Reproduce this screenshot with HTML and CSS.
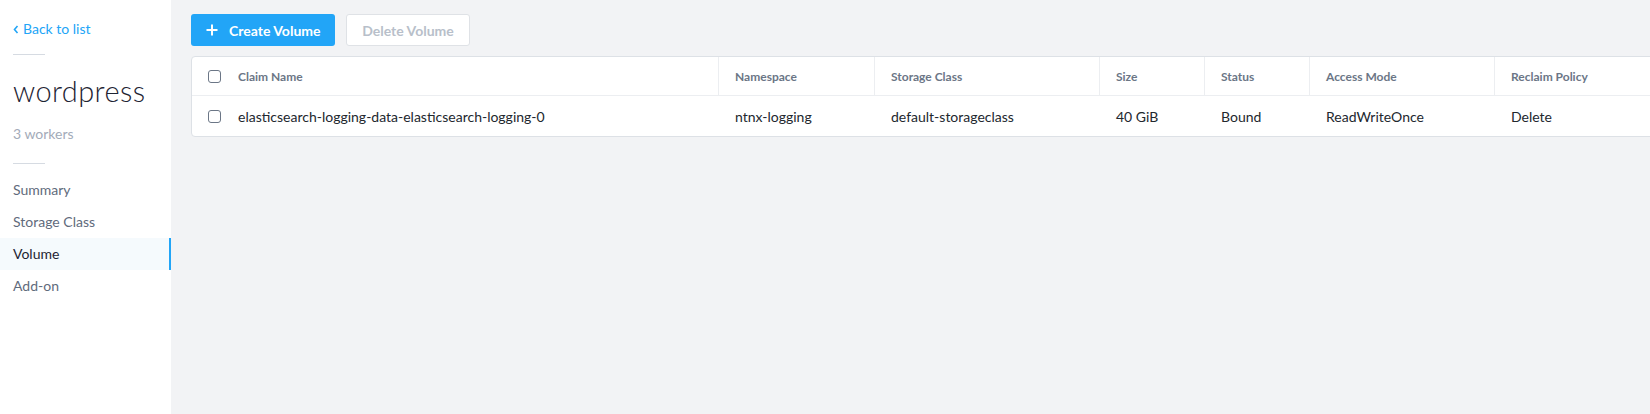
FILE: index.html
```html
<!DOCTYPE html>
<html>
<head>
<meta charset="utf-8">
<link rel="stylesheet" href="styles.css">
</head>
<body>
<div class="app">
  <aside class="sidebar">
    <a class="back" href="#"><svg class="chev" width="6" height="9" viewBox="0 0 6 9"><path d="M4.5 1 L1.5 4.5 L4.5 8" fill="none" stroke="currentColor" stroke-width="1.6"/></svg>Back to list</a>
    <div class="divider"></div>
    <div class="title">wordpress</div>
    <div class="sub">3 workers</div>
    <div class="divider d2"></div>
    <nav class="nav">
      <div class="nav-item">Summary</div>
      <div class="nav-item">Storage Class</div>
      <div class="nav-item active">Volume</div>
      <div class="nav-item">Add-on</div>
    </nav>
  </aside>
  <main class="main">
    <div class="toolbar">
      <button class="btn primary"><svg width="12" height="12" viewBox="0 0 12 12"><path d="M6 0.5 V11.5 M0.5 6 H11.5" stroke="#fff" stroke-width="2"/></svg><span>Create Volume</span></button>
      <button class="btn disabled">Delete Volume</button>
    </div>
    <div class="card">
      <div class="row head">
        <div class="cell c0"><span class="cb"></span>Claim Name</div>
        <div class="cell c1">Namespace</div>
        <div class="cell c2">Storage Class</div>
        <div class="cell c3">Size</div>
        <div class="cell c4">Status</div>
        <div class="cell c5">Access Mode</div>
        <div class="cell c6">Reclaim Policy</div>
      </div>
      <div class="row body">
        <div class="cell c0"><span class="cb"></span>elasticsearch-logging-data-elasticsearch-logging-0</div>
        <div class="cell c1">ntnx-logging</div>
        <div class="cell c2">default-storageclass</div>
        <div class="cell c3">40 GiB</div>
        <div class="cell c4">Bound</div>
        <div class="cell c5">ReadWriteOnce</div>
        <div class="cell c6">Delete</div>
      </div>
    </div>
  </main>
</div>
</body>
</html>
```

FILE: styles.css
```css
* { box-sizing: border-box; }
html, body { margin: 0; padding: 0; height: 100%; }
body {
  font-family: Lato, "Liberation Sans", sans-serif;
  background: #f2f3f5;
  overflow: hidden;
}
.app { display: flex; height: 414px; }
.sidebar {
  width: 171px;
  flex: none;
  background: #fff;
  padding-top: 19px;
}
.back {
  display: flex;
  align-items: center;
  gap: 4px;
  margin-left: 13px;
  color: #22a5f7;
  text-decoration: none;
  font-size: 14px;
  line-height: 20px;
}
.chev { margin-top: 1px; }
.divider {
  width: 32px;
  height: 1px;
  background: #d6dbe2;
  margin: 15px 0 0 13px;
}
.title {
  margin: 19px 0 0 13px;
  font-size: 29px;
  font-weight: 300;
  color: #1e2433;
  line-height: 34px;
  letter-spacing: 0.4px;
}
.sub {
  margin: 16px 0 0 13px;
  font-size: 14px;
  color: #a3abb9;
  line-height: 20px;
}
.d2 { margin-top: 19px; }
.nav { margin-top: 10px; }
.nav-item {
  height: 32px;
  line-height: 32px;
  padding-left: 13px;
  font-size: 14px;
  color: #5f6b7c;
}
.nav-item.active {
  background: #f5fafd;
  color: #1e2433;
  border-right: 2px solid #22a5f7;
}
.main {
  flex: 1;
  min-width: 0;
  padding: 14px 0 0 20px;
  overflow: hidden;
}
.toolbar { display: flex; gap: 11px; }
.btn {
  height: 32px;
  border-radius: 3px;
  font-family: inherit;
  font-size: 14px;
  font-weight: 700;
  display: flex;
  align-items: center;
  padding: 0;
  cursor: pointer;
}
.btn.primary {
  width: 144px;
  background: #22a5f7;
  border: none;
  color: #fff;
  padding-left: 15px;
  gap: 11px;
}
.btn.disabled {
  width: 124px;
  background: #fff;
  border: 1px solid #dfe2e6;
  color: #b8bfca;
  justify-content: center;
}
.card {
  margin-top: 10px;
  width: 1700px;
  background: #fff;
  border: 1px solid #dde1e6;
  border-radius: 4px;
}
.row { display: flex; }
.row.head { height: 39px; border-bottom: 1px solid #eceef1; }
.row.body { height: 40px; }
.cell {
  display: flex;
  align-items: center;
  padding-left: 16px;
  flex: none;
}
.head .cell {
  font-size: 12px;
  font-weight: 700;
  color: #6b7686;
  border-left: 1px solid #eceef1;
}
.head .cell.c0 { border-left: none; }
.body .cell { font-size: 14px; color: #22272e; padding-left: 17px; }
.c0 { width: 526px; padding-left: 16px !important; }
.c1 { width: 156px; }
.c2 { width: 225px; }
.c3 { width: 105px; }
.c4 { width: 105px; }
.c5 { width: 185px; }
.c6 { width: 300px; }
.cb {
  width: 13px;
  height: 13px;
  border: 1.5px solid #6b7686;
  border-radius: 3px;
  margin-right: 17px;
  flex: none;
}
```
